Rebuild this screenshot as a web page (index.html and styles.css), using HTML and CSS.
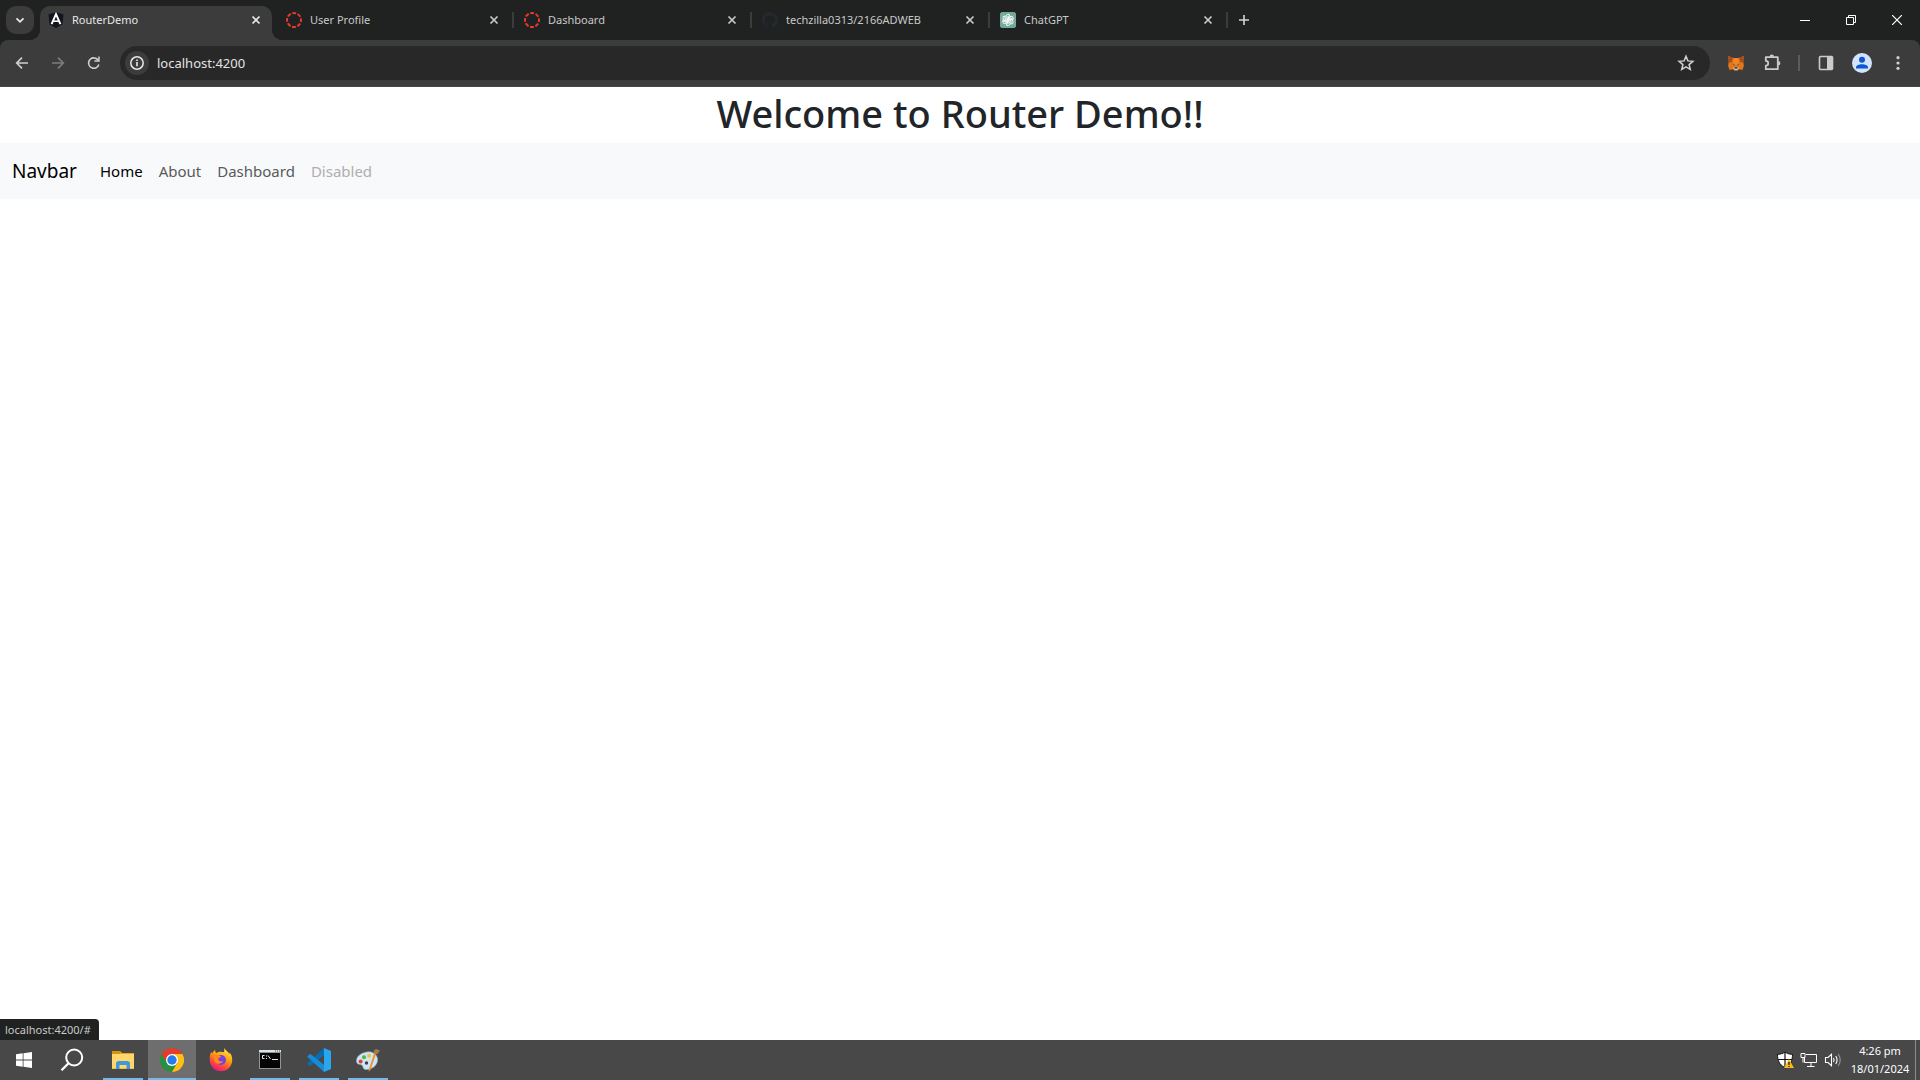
FILE: index.html
```html
<!DOCTYPE html>
<html lang="en">
<head>
<meta charset="utf-8">
<title>RouterDemo</title>
<link rel="stylesheet" href="styles.css">
</head>
<body>
<svg class="defs" aria-hidden="true">
  <symbol id="close" viewBox="0 0 16 16"><path d="M4.5 4.5l7 7M11.5 4.5l-7 7" stroke="currentColor" stroke-width="1.7" fill="none"/></symbol>
  <symbol id="canvas" viewBox="0 0 16 16"><circle cx="8" cy="8" r="7" fill="none" stroke="#e63b2e" stroke-width="2" stroke-dasharray="3.9 1.6" stroke-dashoffset="1.95"/></symbol>
</svg>

<header class="browser">
  <div class="tabstrip">
    <button class="tab-search" aria-label="Search tabs"><svg width="16" height="16" viewBox="0 0 16 16"><path d="M4.5 6.3L8 9.8l3.5-3.5" fill="none" stroke="#e8e8e8" stroke-width="1.8"/></svg></button>
    <div class="tabs">
      <div class="tab active">
        <svg width="16" height="16" viewBox="0 0 16 16"><path d="M8 0l7.5 2.6-1.1 10L8 16l-6.400-3.400L.5 2.600z" fill="#12141f"/><path d="M3.600 12.200L8 2.200l4.400 10" fill="none" stroke="#fff" stroke-width="2"/><path d="M5.500 9.200h5" stroke="#fff" stroke-width="1.600"/></svg>
        <span class="title">RouterDemo</span>
        <button class="close" aria-label="Close RouterDemo"><svg width="16" height="16"><use href="#close"/></svg></button>
      </div>
      <div class="tab">
        <svg width="16" height="16"><use href="#canvas"/></svg>
        <span class="title">User Profile</span>
        <button class="close" aria-label="Close User Profile"><svg width="16" height="16"><use href="#close"/></svg></button>
      </div>
      <div class="tab">
        <svg width="16" height="16"><use href="#canvas"/></svg>
        <span class="title">Dashboard</span>
        <button class="close" aria-label="Close Dashboard"><svg width="16" height="16"><use href="#close"/></svg></button>
      </div>
      <div class="tab">
        <svg width="16" height="16" viewBox="0 0 16 16"><path fill="#24292f" d="M8 0C3.580 0 0 3.580 0 8c0 3.540 2.290 6.530 5.470 7.590.4.070.55-.17.55-.38 0-.19-.01-.82-.01-1.490-2.010.37-2.530-.49-2.690-.94-.09-.23-.48-.94-.82-1.130-.28-.15-.68-.52-.01-.53.63-.01 1.080.58 1.230.82.72 1.210 1.870.87 2.330.66.07-.52.28-.87.51-1.070-1.780-.2-3.640-.89-3.640-3.950 0-.87.31-1.590.82-2.150-.08-.2-.36-1.020.08-2.120 0 0 .67-.21 2.200.82a7.600 7.600 0 014 0c1.530-1.040 2.200-.82 2.200-.82.44 1.100.16 1.920.08 2.120.51.56.82 1.270.82 2.150 0 3.070-1.870 3.750-3.650 3.950.29.25.54.73.54 1.480 0 1.070-.01 1.930-.01 2.200 0 .21.15.46.55.38A8 8 0 0016 8c0-4.420-3.580-8-8-8z"/></svg>
        <span class="title">techzilla0313/2166ADWEB</span>
        <button class="close" aria-label="Close techzilla0313/2166ADWEB"><svg width="16" height="16"><use href="#close"/></svg></button>
      </div>
      <div class="tab">
        <svg width="16" height="16" viewBox="0 0 16 16"><rect width="16" height="16" rx="2.500" fill="#74aa9c"/><g transform="translate(8 8)" fill="none" stroke="#fff" stroke-width=".9"><path id="petal" d="M-1.900-1.200v-2.400a2.100 2.100 0 013.900-1l-2.900 1.700V1.100"/><use href="#petal" transform="rotate(60)"/><use href="#petal" transform="rotate(120)"/><use href="#petal" transform="rotate(180)"/><use href="#petal" transform="rotate(240)"/><use href="#petal" transform="rotate(300)"/></g></svg>
        <span class="title">ChatGPT</span>
        <button class="close" aria-label="Close ChatGPT"><svg width="16" height="16"><use href="#close"/></svg></button>
      </div>
    </div>
    <button class="new-tab" aria-label="New tab"><svg width="12" height="12" viewBox="0 0 12 12"><path d="M6 1v10M1 6h10" stroke="#d5d5d5" stroke-width="1.600"/></svg></button>
    <div class="window-controls">
      <button aria-label="Minimise"><svg width="10" height="10"><path d="M0 5.500h10" stroke="#fff"/></svg></button>
      <button aria-label="Restore"><svg width="10" height="10"><path d="M.5 2.500h7v7h-7zM2.500 2.500v-2h7v7h-2" fill="none" stroke="#fff"/></svg></button>
      <button aria-label="Close window"><svg width="10" height="10"><path d="M0 0l10 10M10 0L0 10" stroke="#fff" stroke-width="1.200"/></svg></button>
    </div>
  </div>

  <div class="toolbar">
    <div class="tools">
      <button aria-label="Back"><svg width="16" height="16" viewBox="0 0 16 16"><path d="M14 8H3M8 2.700L2.700 8 8 13.300" fill="none" stroke="#cfcfcf" stroke-width="1.700"/></svg></button>
      <button aria-label="Forward" disabled><svg width="16" height="16" viewBox="0 0 16 16"><path d="M2 8h11M8 2.700L13.300 8 8 13.300" fill="none" stroke="#7c7c7c" stroke-width="1.700"/></svg></button>
      <button aria-label="Reload"><svg width="16" height="16" viewBox="0 0 16 16"><path d="M12.800 9.500A5.200 5.200 0 118 2.800c1.700 0 3.200.9 4.300 2.300" fill="none" stroke="#cfcfcf" stroke-width="1.700"/><path d="M13.700 1.500v5.300H8.400V5.300h3.800V1.500z" fill="#cfcfcf"/></svg></button>
    </div>
    <div class="omnibox">
      <button class="site-info" aria-label="View site information"><svg width="16" height="16" viewBox="0 0 16 16"><circle cx="8" cy="8" r="6.200" fill="none" stroke="#e8e8e8" stroke-width="1.500"/><path d="M8 7v4.300M8 4.500v1.600" stroke="#e8e8e8" stroke-width="1.600"/></svg></button>
      <input type="text" aria-label="Address" value="localhost:4200" spellcheck="false">
      <button class="star" aria-label="Bookmark this tab"><svg width="18" height="18" viewBox="0 0 18 18"><path d="M9 2.200l1.900 4.700 5 .4-3.800 3.300 1.200 4.900L9 12.900l-4.300 2.600 1.200-4.900-3.800-3.300 5-.4z" fill="none" stroke="#d0d0d0" stroke-width="1.500"/></svg></button>
    </div>
    <div class="tools">
      <button aria-label="MetaMask"><svg width="16" height="16" viewBox="0 0 16 16"><path d="M0 .8L5 3h6l5-2.200-.7 5.200.5 5-1.300 4-3.300-.8-1.700 1.300h-3l-1.700-1.300-3.300.8-1.300-4 .5-5z" fill="#e2761b"/><path d="M0 .8L5 3 3.600 7.200.8 7.500zM16 .8L11 3l1.400 4.200 2.800.3z" fill="#a34d20"/><path d="M5 3h6l-1 6.500H6z" fill="#f0852a"/><path d="M4.600 9.400l1.700.1v.9zM11.400 9.400l-1.700.1v.9z" fill="#283238"/><path d="M5 12.800l1.500-.8h3l1.500.8-1.500 2.400h-3z" fill="#c9bdb0"/><path d="M6.600 12.200h2.800l.2 1.400H6.400z" fill="#20242a"/></svg></button>
      <button aria-label="Extensions"><svg width="18" height="18" viewBox="0 0 18 18"><path d="M2.800 3.200h12v12h-12v-3.600a2.400 2.400 0 000-4.800z" fill="none" stroke="#cbcbcb" stroke-width="1.800" stroke-linejoin="round"/><path d="M6.600 2.800a2.200 2.200 0 014.400 0M15.200 7a2.200 2.200 0 010 4.400" fill="#cbcbcb"/></svg></button>
      <span class="divider"></span>
      <button aria-label="Side panel"><svg width="16" height="16" viewBox="0 0 16 16"><rect x="1.500" y="1.500" width="13" height="13" rx="1" fill="none" stroke="#cbcbcb" stroke-width="1.600"/><path d="M9 1.500h5.500v13H9z" fill="#cbcbcb"/></svg></button>
      <button aria-label="Profile"><svg width="20" height="20" viewBox="0 0 20 20"><circle cx="10" cy="10" r="10" fill="#d3e3fd"/><circle cx="10" cy="6.800" r="3" fill="#0b57d0"/><path d="M4 15.600v-1.200c0-2.200 3-3.200 6-3.200s6 1 6 3.200v1.200z" fill="#0b57d0"/></svg></button>
      <button aria-label="Menu"><svg width="16" height="16" viewBox="0 0 16 16"><g fill="#d0d0d0"><circle cx="8" cy="2.700" r="1.600"/><circle cx="8" cy="8" r="1.600"/><circle cx="8" cy="13.300" r="1.600"/></g></svg></button>
    </div>
  </div>
</header>

<main class="page">
  <h1>Welcome to Router Demo!!</h1>
  <nav class="navbar">
    <a class="brand" href="#">Navbar</a>
    <a class="nav-link current" href="#">Home</a>
    <a class="nav-link" href="#about">About</a>
    <a class="nav-link" href="#dashboard">Dashboard</a>
    <a class="nav-link disabled" href="#disabled" aria-disabled="true">Disabled</a>
  </nav>
  <div class="status">localhost:4200/#</div>
</main>

<footer class="taskbar">
  <button class="system" aria-label="Start"><svg width="16" height="16" viewBox="0 0 16 16"><path d="M0 2.300L6.700 1.300v6.200H0zM7.500 1.200L16 0v7.500H7.500zM0 8.400h6.700v6.300L0 13.700zM7.500 8.400H16V16l-8.500-1.200z" fill="#fff"/></svg></button>
  <button class="system" aria-label="Search"><svg width="24" height="24" viewBox="0 0 24 24"><circle cx="14.200" cy="9.500" r="8" fill="none" stroke="#fff" stroke-width="2"/><path d="M8.500 15.200L1.500 22.300" stroke="#fff" stroke-width="2.200"/></svg></button>
  <div class="apps">
    <button class="app open" aria-label="File Explorer"><svg width="24" height="24" viewBox="0 0 24 24"><path d="M1 3h8l2 2h12v16H1z" fill="#e8a520"/><path d="M1 6h22v14.500H1z" fill="#ffd66b"/><path d="M1 3h8v3H1z" fill="#d7930d"/><path d="M5 21v-6.500L7 13h10l2 1.500V21h-3.500v-4H8.500v4z" fill="#3f98dd"/></svg></button>
    <button class="app focused" aria-label="Google Chrome"><svg width="24" height="24" viewBox="0 0 24 24"><circle cx="12" cy="12" r="12" fill="#e33b2e"/><path d="M1.600 6A12 12 0 0012 24l5.200-9L12 12 6.800 15z" fill="#229342"/><path d="M12 6h10.400A12 12 0 0112 24l5.200-9z" fill="#fbc116"/><circle cx="12" cy="12" r="6" fill="#fff"/><circle cx="12" cy="12" r="4.700" fill="#2779ef"/></svg></button>
    <button class="app" aria-label="Firefox"><svg width="24" height="24" viewBox="0 0 24 24"><defs><linearGradient id="fire" x1=".8" y1="0" x2=".3" y2="1"><stop offset="0" stop-color="#fff044"/><stop offset=".45" stop-color="#ff980e"/><stop offset=".75" stop-color="#ff4343"/><stop offset="1" stop-color="#e31587"/></linearGradient></defs><path d="M15.500 0c-.5 2 .2 3.500-.8 4.300-2-1-5.500-.7-7 .7C6.500 4.500 6 3.300 6.200 2 4.500 3 3.800 4.200 3.500 5.200L2 4.200C.7 6.800.8 9 .8 12a11.200 11.200 0 0022.400 0c0-3.500-1-6-3-7.500l.2 2C19.500 3.500 16.300 2.500 15.500 0z" fill="url(#fire)"/><circle cx="12" cy="12" r="5" fill="#7542e5"/><path d="M5 8c3-2 5-.5 7 0 0 1.500-2.500 2-3 2.500.5 3 3 3.500 5 2.500-1 3-6 4-8 1-1-2-1-4-1-6z" fill="#ff8a16"/></svg></button>
    <button class="app open" aria-label="Command Prompt"><svg width="24" height="24" viewBox="0 0 24 24"><path d="M1 2h22v19H1z" fill="#8e9598"/><path d="M2 5h20v15H2z" fill="#050505"/><path d="M1 2h22v2H1z" fill="#dde3e6"/><path d="M17 3h1m1 0h1m1 0h1" stroke="#3c4b55"/><path d="M6.500 7.500h-2v3h2M8.500 7.500v1m0 1.500v1M10 7.500l2.500 3.500M14 11.500h6" fill="none" stroke="#e8e8e8" stroke-width="1"/></svg></button>
    <button class="app open" aria-label="Visual Studio Code"><svg width="24" height="24" viewBox="0 0 24 24"><path d="M17 0v7.200L3.200 18.200 0 15.500z" fill="#0a6cb0"/><path d="M0 8.500l3.200-2.700L17 16.800V24z" fill="#168bd8"/><path d="M17 0l7 3v18l-7 3z" fill="#28a7ef"/></svg></button>
    <button class="app open" aria-label="Paint"><svg width="24" height="24" viewBox="0 0 24 24"><path d="M11 4c6-1 11 3 10.500 8.500S15 22 9.500 21.500c-3-.4-2-3-3.500-4.300C4.500 16 .5 17.200.5 12.800.5 8 5.500 4.800 11 4z" fill="#cfe5f3" stroke="#8ab4cf" stroke-width=".6"/><circle cx="10.500" cy="15" r="1.700" fill="#38434b"/><circle cx="4.600" cy="13.500" r="2" fill="#e33c35"/><circle cx="8" cy="9.300" r="2" fill="#4eb83f"/><circle cx="13" cy="7.800" r="2" fill="#f1c62c"/><path d="M20.700 4L14.500 22l-1.800 1.500.2-2.300L18.500 4z" fill="#ec9431"/><path d="M17.800 2.800l2.200-1.800 4 1.500-2.700 3.400-3 .3z" fill="#a97850"/></svg></button>
  </div>
  <div class="tray">
    <button aria-label="Windows Security"><svg width="18" height="18" viewBox="0 0 18 18"><path d="M9 1C6.500 2.800 4 3.300 1.500 3.300 1.500 9 3 14 9 16.500 15 14 16.500 9 16.500 3.300 14 3.300 11.500 2.800 9 1z" fill="#fff" stroke="#111" stroke-width="1"/><path d="M9 1v15M2 8.500h14" stroke="#111" stroke-width="1.200"/><path d="M13 8l5 9H8z" fill="#fbb917"/><path d="M13 11v3m0 1v1" stroke="#222" stroke-width="1.300"/></svg></button>
    <button aria-label="Network"><svg width="18" height="16" viewBox="0 0 18 16"><path d="M6 2.500h10.500v8H4.500V6M11 10.500v4M7 14.500h7.500M1 1.500h4v4H1zM3 5.500v5" fill="none" stroke="#fff"/></svg></button>
    <button aria-label="Volume"><svg width="18" height="16" viewBox="0 0 18 16"><path d="M1.500 5.500H4l3.500-3.200v11.400L4 10.500H1.500z" fill="none" stroke="#fff" stroke-width="1.100"/><path d="M9.500 6q1.200 2 0 4M11.800 4q2.500 4 0 8" fill="none" stroke="#fff" stroke-width="1.100"/><path d="M14.200 2q4 6 0 12" fill="none" stroke="#999" stroke-width="1.100"/></svg></button>
    <button class="clock"><span>4:26 pm</span><span>18/01/2024</span></button>
    <button class="show-desktop" aria-label="Show desktop"></button>
  </div>
</footer>
</body>
</html>
```
FILE: styles.css
```css
* {
  box-sizing: border-box;
}

body {
  display: flex;
  flex-direction: column;
  min-height: 100vh;
  margin: 0;
  background: #fff;
  font-family: "Noto Sans", "Open Sans", sans-serif;
}

svg {
  display: block;
  flex: none;
}

button {
  display: flex;
  align-items: center;
  justify-content: center;
  flex: none;
  margin: 0;
  padding: 0;
  border: 0;
  background: none;
  color: inherit;
  font: inherit;
}

.defs {
  position: absolute;
  width: 0;
  height: 0;
}

/* Browser frame */
.browser {
  background: #202221;
}

.tabstrip {
  display: flex;
  align-items: center;
  height: 40px;
  padding-left: 6px;
}

.tab-search {
  width: 28px;
  height: 28px;
  margin-right: 6px;
  border-radius: 10px;
  background: #3c3c3c;
}

.tabs {
  display: flex;
  align-self: flex-end;
  flex: 0 1 1190px;
  min-width: 0;
}

.tab {
  position: relative;
  display: flex;
  align-items: center;
  flex: 1 1 0;
  gap: 8px;
  min-width: 0;
  height: 34px;
  margin-right: 6px;
  padding: 0 8px 6px;
  color: #c9c9c9;
  font-size: 11px;
  line-height: 18px;
}

.tab:not(.active)::after {
  content: "";
  position: absolute;
  top: 6px;
  right: -4px;
  width: 2px;
  height: 16px;
  background: #3c3c3c;
}

.tab.active {
  border-radius: 10px 10px 0 0;
  background: #3c3c3c;
  color: #e8e8e8;
}

/* Curved feet joining the active tab to the toolbar */
.tab.active::before,
.tab.active::after {
  content: "";
  position: absolute;
  bottom: 0;
  width: 10px;
  height: 10px;
}

.tab.active::before {
  right: 100%;
  background: radial-gradient(circle at 0 0, transparent 10px, #3c3c3c 10px);
}

.tab.active::after {
  left: 100%;
  background: radial-gradient(circle at 100% 0, transparent 10px, #3c3c3c 10px);
}

.title {
  flex: 1;
  overflow: hidden;
  white-space: nowrap;
}

.new-tab {
  width: 28px;
  height: 28px;
}

.window-controls {
  display: flex;
  margin-left: auto;
}

.window-controls button {
  width: 46px;
  height: 40px;
}

.toolbar {
  display: flex;
  align-items: center;
  gap: 8px;
  height: 47px;
  padding: 0 4px;
  border-bottom: 1px solid #474747;
  border-radius: 8px 8px 0 0;
  background: #3c3c3c;
}

.tools {
  display: flex;
  align-items: center;
}

.tools button {
  width: 36px;
  height: 34px;
}

.divider {
  width: 2px;
  height: 16px;
  margin: 0 8px;
  background: #5c5c5c;
}

.omnibox {
  display: flex;
  align-items: center;
  flex: 1;
  height: 34px;
  padding: 0 12px 0 5px;
  border-radius: 17px;
  background: #282828;
}

.site-info {
  width: 24px;
  height: 24px;
  border-radius: 12px;
  background: #3c3c3c;
}

.omnibox input {
  flex: 1;
  min-width: 0;
  margin: 0;
  padding: 0 8px;
  border: 0;
  outline: 0;
  background: none;
  color: #e3e3e3;
  font: 13px/20px "Noto Sans", "Open Sans", sans-serif;
}

.star {
  width: 24px;
  height: 24px;
}

/* Web page */
.page {
  position: relative;
  flex: 1;
}

h1 {
  margin: 0;
  padding: 1px 0 5px;
  color: #212529;
  font-size: 38px;
  font-weight: 500;
  line-height: 50px;
  text-align: center;
}

.navbar {
  display: flex;
  align-items: center;
  min-height: 56px;
  padding: 8px 12px;
  background: #f8f9fa;
}

.brand {
  margin-right: 15px;
  color: #000;
  font-size: 19px;
  line-height: 32px;
  text-decoration: none;
}

.nav-link {
  padding: 8px;
  color: #595a5a;
  font-size: 15px;
  line-height: 24px;
  text-decoration: none;
}

.nav-link.current {
  color: #000;
}

.nav-link.disabled {
  color: #aeaeaf;
}

.status {
  position: absolute;
  bottom: 0;
  left: 0;
  padding: 1px 8px 0 5px;
  border-radius: 0 4px 0 0;
  background: #202221;
  color: #c9c9c9;
  font-size: 11px;
  line-height: 20px;
}

/* Taskbar */
.taskbar {
  display: flex;
  height: 40px;
  background: #484848;
  color: #fff;
}

.system {
  width: 48px;
}

.apps {
  display: flex;
  gap: 1px;
  margin-left: 3px;
}

.app {
  width: 48px;
  border-top: 2px solid transparent;
  border-bottom: 2px solid transparent;
}

.app.open {
  background: linear-gradient(#76b9ed, #76b9ed) center bottom / 40px 2px no-repeat border-box;
}

.app.focused {
  border-top-color: #6e6e6e;
  border-bottom-color: #76b9ed;
  background: #6e6e6e;
}

.tray {
  display: flex;
  margin-left: auto;
}

.tray button {
  width: 24px;
}

.tray .clock {
  flex-direction: column;
  width: 70px;
  font-size: 11px;
  line-height: 18px;
}

.tray .show-desktop {
  width: 5px;
  border-left: 1px solid #8c8c8c;
}
```
